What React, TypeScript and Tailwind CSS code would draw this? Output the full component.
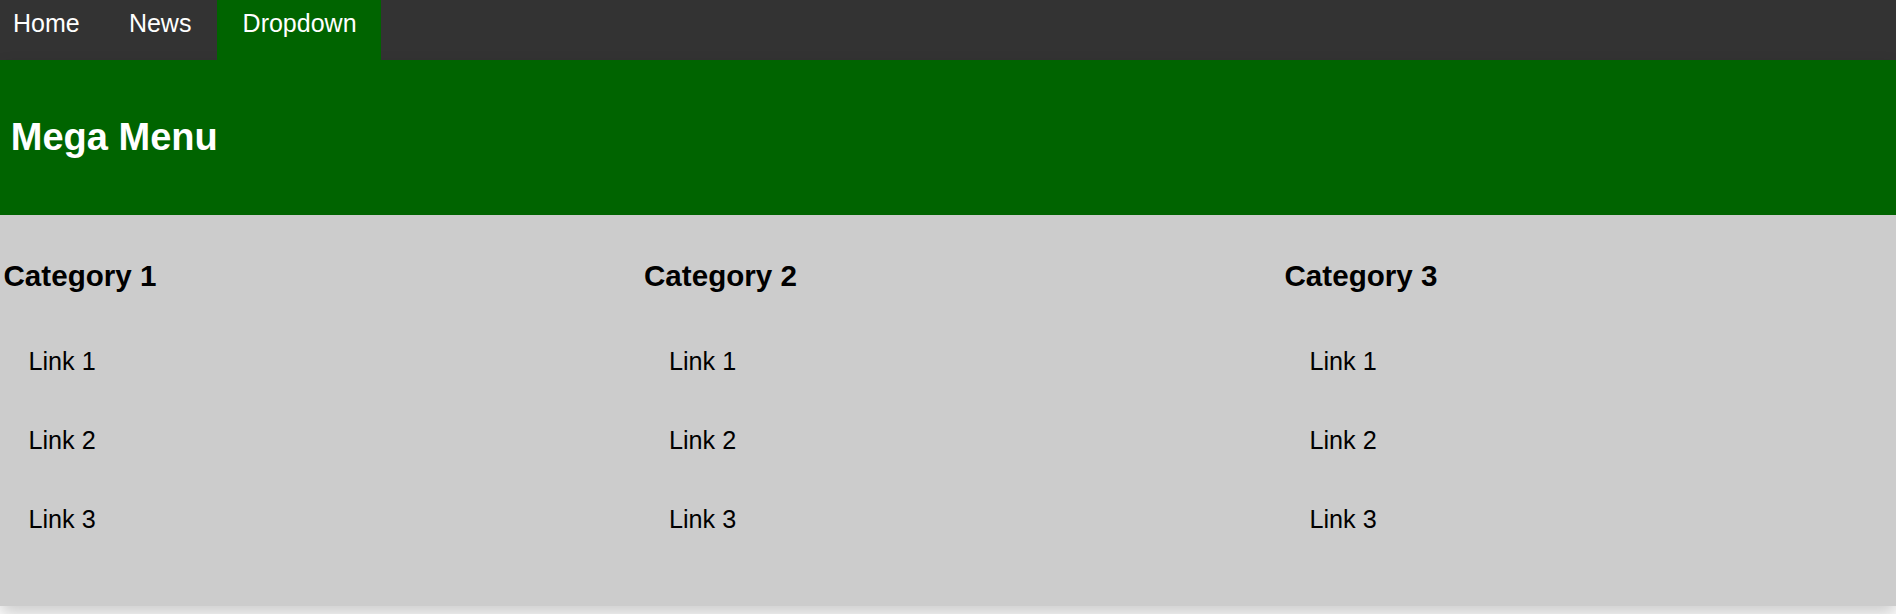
import React from "react";

const font = { fontFamily: '"Liberation Sans", Arial, sans-serif' };

function Column({ title }: { title: string }) {
  return (
    <div className="w-[640.5px] shrink-0">
      <h3 className="mt-[43.8px] text-[29.6px] leading-[34px] font-bold text-black">{title}</h3>
      <div className="mt-[29px] flex flex-col">
        {["Link 1", "Link 2", "Link 3"].map((l) => (
          <a key={l} className="block pl-[25px] py-[25px] text-[25.2px] leading-[29px] text-black">
            {l}
          </a>
        ))}
      </div>
    </div>
  );
}

export default function App() {
  return (
    <div className="min-h-[614px] w-full bg-white" style={font}>
      <nav className="flex h-[60px] bg-[#333333] text-white">
        <a className="h-[60px] pl-[13px] pr-[23.6px] pt-[9.3px] text-[25px] leading-[29px]">Home</a>
        <a className="h-[60px] px-[25.6px] pt-[9.3px] text-[25px] leading-[29px]">News</a>
        <div className="h-[60px] w-[164px] bg-[#006400] pl-[25.6px] pt-[9.3px] text-[25px] leading-[29px]">
          Dropdown
        </div>
      </nav>
      <div className="shadow-[0_8px_16px_0_rgba(0,0,0,0.2)]">
        <div className="h-[155px] bg-[#006400] pl-[10.8px] pt-[55.3px]">
          <h2 className="text-[38px] leading-[44px] font-bold text-white">Mega Menu</h2>
        </div>
        <div className="flex h-[391px] bg-[#cccccc] pl-[3.5px] overflow-hidden">
          <Column title="Category 1" />
          <Column title="Category 2" />
          <Column title="Category 3" />
        </div>
      </div>
    </div>
  );
}
